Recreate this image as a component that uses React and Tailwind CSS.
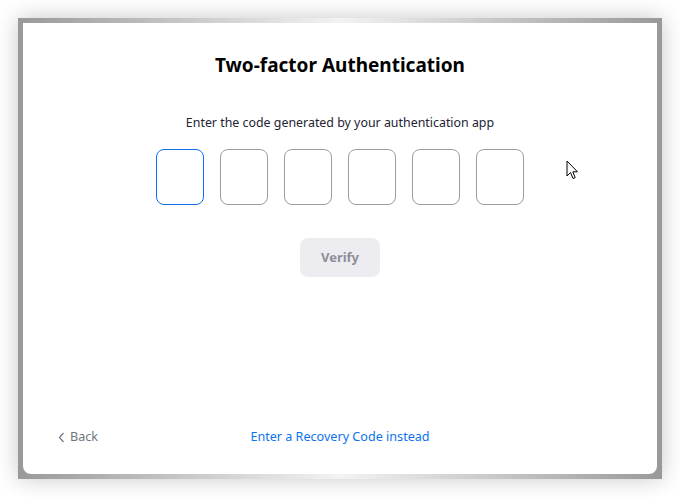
import React from "react";

const font = { fontFamily: '"Noto Sans", "Open Sans", Arial, sans-serif' };

const CodeBox = ({ active }) => (
  <input
    type="text"
    maxLength={1}
    className={
      "w-12 h-14 rounded-lg border bg-white outline-none text-center text-lg " +
      (active ? "border-[#0e72ed]" : "border-[#9c9ca4]")
    }
  />
);

const App = () => {
  return (
    <div className="w-[680px] h-[497px] bg-white p-[18px] relative" style={font}>
      <div className="h-[461px] p-[5px] bg-[linear-gradient(to_right,#999999,#f3f3f3,#999999)] shadow-[0_0_22px_rgba(0,0,0,0.22)]">
        <div className="h-full bg-white rounded-b-lg flex flex-col items-center">
          <h1 className="pt-[30px] text-[19px] leading-6 font-bold text-black">
            Two-factor Authentication
          </h1>
          <p className="mt-[37px] text-[12.4px] leading-[18px] text-[#232333]">
            Enter the code generated by your authentication app
          </p>
          <div className="mt-[17px] flex gap-4">
            <CodeBox active />
            <CodeBox />
            <CodeBox />
            <CodeBox />
            <CodeBox />
            <CodeBox />
          </div>
          <button className="mt-[33px] w-20 h-[39px] rounded-lg bg-[#ededf1] text-[13px] font-bold text-[#8e8e9a]">
            Verify
          </button>
          <div className="mt-auto w-full pb-[28px] grid grid-cols-[1fr_auto_1fr] items-center text-[12.6px] leading-[18px]">
            <div className="pl-[35px] flex items-center gap-[5px] text-[#6e7680]">
              <svg width="7" height="11" viewBox="0 0 7 11" fill="none">
                <path d="M5.5 1 L1.5 5.5 L5.5 10" stroke="#6e7680" strokeWidth="1.2" />
              </svg>
              <span>Back</span>
            </div>
            <a className="text-[#0e72ed] cursor-pointer">Enter a Recovery Code instead</a>
            <div />
          </div>
        </div>
      </div>
      <svg
        className="absolute left-[566px] top-[160px]"
        width="13"
        height="21"
        viewBox="0 0 13 21"
      >
        <path
          d="M1 1 L1 16 L4.5 12.5 L7 18.5 L9.2 17.6 L6.8 11.8 L11.5 11.8 Z"
          fill="white"
          stroke="black"
          strokeWidth="1"
          strokeLinejoin="round"
        />
      </svg>
    </div>
  );
};

export default App;
